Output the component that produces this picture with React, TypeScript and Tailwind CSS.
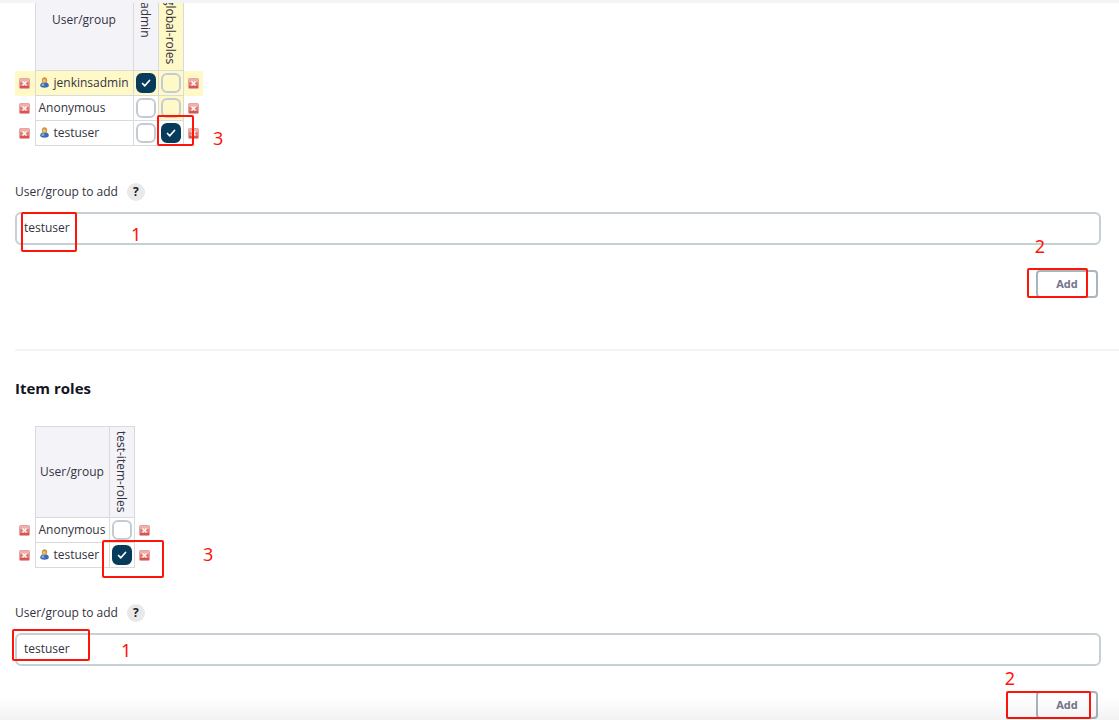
// src/App.tsx
import React, { useId, useState } from 'react';

interface Role {
  name: string;
  align?: 'center' | 'end';
}

interface Member {
  name: string;
  isUser: boolean;
  granted: boolean[];
}

interface RoleTableProps {
  roles: Role[];
  members: Member[];
  headHeight: string;
  nameWidth: string;
  hoverRow?: number;
  hoverCol?: number;
}

const DeleteIcon: React.FC = () => (
  <svg width="11" height="11" viewBox="0 0 11 11" className="block">
    <rect x="0.5" y="0.5" width="10" height="10" rx="1" fill="#e47e78" stroke="#e3a5a1" />
    <rect x="1" y="1" width="9" height="3" fill="#efb0a9" />
    <rect x="1" y="8" width="9" height="2" fill="#dc5450" />
    <path d="M3.500 3.500l4 4M7.500 3.500l-4 4" stroke="#fff" strokeWidth="1.400" />
  </svg>
);

const PersonIcon: React.FC = () => (
  <svg width="9" height="11" viewBox="0 0 9 11" className="block shrink-0">
    <path d="M0.200 8.500C0.200 6.400 2 5 4.500 5s4.300 1.400 4.300 3.500C8.800 11.400 0.200 11.400 0.200 8.500z" fill="#3a6cb4" />
    <path d="M1.200 8.600C1.300 7.200 2.200 6.200 3.500 6L4.500 9z" fill="#8aaedb" />
    <ellipse cx="4.500" cy="3.300" rx="2.600" ry="3" fill="#cf9038" />
    <ellipse cx="4.300" cy="3.800" rx="1.600" ry="1.800" fill="#edc078" />
  </svg>
);

const RoleCheckbox: React.FC<{ label: string; defaultChecked: boolean }> = ({ label, defaultChecked }) => (
  <label className="mx-auto grid size-5">
    <input
      type="checkbox"
      aria-label={label}
      defaultChecked={defaultChecked}
      className="peer col-start-1 row-start-1 size-5 appearance-none rounded-md border-2 border-[#c3ccd4] checked:border-[#073b5c] checked:bg-[#073b5c]"
    />
    <svg viewBox="0 0 20 20" className="pointer-events-none col-start-1 row-start-1 hidden size-5 peer-checked:block">
      <path d="M6.500 10.500l2.300 2.300L13.500 7.500" fill="none" stroke="#fff" strokeWidth="1.700" strokeLinecap="round" strokeLinejoin="round" />
    </svg>
  </label>
);

const DeleteCell: React.FC<{ name: string; highlighted: boolean }> = ({ name, highlighted }) => (
  <td className={`w-5 p-0 ${highlighted ? 'bg-[#fff9c8]' : ''}`}>
    <button type="button" aria-label={`Remove ${name}`} className="mx-auto block">
      <DeleteIcon />
    </button>
  </td>
);

const RoleTable: React.FC<RoleTableProps> = ({ roles, members, headHeight, nameWidth, hoverRow, hoverCol }) => (
  <table className="border-collapse">
    <thead>
      <tr className={headHeight}>
        <td className="w-5 p-0"></td>
        <th className={`border border-[#d9dadc] bg-[#f3f3f8] p-0 text-center font-normal ${nameWidth}`}>User/group</th>
        {roles.map((role, col) => (
          <th
            key={role.name}
            className={`w-[25px] border border-[#d9dadc] p-0 font-normal ${col === hoverCol ? 'bg-[#fff9c8]' : 'bg-[#f3f3f8]'} ${role.align === 'end' ? 'align-bottom pb-1.5' : 'align-middle'}`}
          >
            <span className="mx-auto block leading-[23px] [writing-mode:vertical-rl]">{role.name}</span>
          </th>
        ))}
        <td className="w-5 p-0"></td>
      </tr>
    </thead>
    <tbody>
      {members.map((member, row) => (
        <tr key={member.name} className="h-[25px]">
          <DeleteCell name={member.name} highlighted={row === hoverRow} />
          <td className={`border border-[#d9dadc] p-0 ${row === hoverRow ? 'bg-[#fff9c8]' : ''}`}>
            <div className={`flex items-center gap-[5px] pb-px leading-5 ${member.isUser ? 'pl-1' : 'pl-[3px]'}`}>
              {member.isUser && <PersonIcon />}
              {member.name}
            </div>
          </td>
          {roles.map((role, col) => (
            <td
              key={role.name}
              className={`border border-[#d9dadc] p-0 ${row === hoverRow || (col === hoverCol && row < 2) ? 'bg-[#fff9c8]' : ''}`}
            >
              <RoleCheckbox label={`${member.name} ${role.name}`} defaultChecked={member.granted[col]} />
            </td>
          ))}
          <DeleteCell name={member.name} highlighted={row === hoverRow} />
        </tr>
      ))}
    </tbody>
  </table>
);

// red frame drawn over the page
const Mark: React.FC<{ className: string }> = ({ className }) => (
  <div className={`pointer-events-none absolute rounded-xs border-2 border-[#ff1408] ${className}`} />
);

const Step: React.FC<{ n: number; className: string }> = ({ n, className }) => (
  <span className={`pointer-events-none absolute font-['Noto_Sans',sans-serif] text-lg leading-5 text-[#ff1408] ${className}`}>{n}</span>
);

const AddForm: React.FC<{ children: React.ReactNode }> = ({ children }) => {
  const id = useId();
  const [value, setValue] = useState('testuser');

  return (
    <div className="relative mr-[18px] flex flex-col">
      <div className="flex h-5 items-center gap-[9px]">
        <label htmlFor={id}>User/group to add</label>
        <button type="button" aria-label="Help" className="size-[18px] rounded-full bg-[#e9e9ea] leading-[18px] font-bold text-[#222]">
          ?
        </button>
      </div>
      <input
        id={id}
        type="text"
        value={value}
        onChange={(e) => setValue(e.target.value)}
        className="mt-[10px] h-[33px] w-full rounded-md border-2 border-[#c6cfd4] bg-white px-[7px] pb-0.5 outline-none"
      />
      <div className="mt-[25px] mr-[3px] flex justify-end">
        <button type="button" className="h-7 w-[62px] rounded-sm border-2 border-[#aab4bc] bg-white text-[11px] font-bold text-[#73738c]">
          Add
        </button>
      </div>
      {children}
    </div>
  );
};

export default function App() {
  return (
    <div className="relative h-screen overflow-hidden bg-white font-['Open_Sans','Noto_Sans',sans-serif] text-xs text-[#33333f]">
      <div className="h-[3px] bg-[#f4f4f6]" />
      <main className="pl-[15px]">
        <section className="flex flex-col gap-9">
          <div className="relative">
            {/* the table is scrolled partly under the top bar */}
            <div className="overflow-hidden">
              <div className="-mt-[34px]">
                <RoleTable
                  roles={[{ name: 'admin' }, { name: 'global-roles', align: 'end' }]}
                  members={[
                    { name: 'jenkinsadmin', isUser: true, granted: [true, false] },
                    { name: 'Anonymous', isUser: false, granted: [false, false] },
                    { name: 'testuser', isUser: true, granted: [false, true] },
                  ]}
                  headHeight="h-[101px]"
                  nameWidth="w-[98px]"
                  hoverRow={0}
                  hoverCol={1}
                />
              </div>
            </div>
            <Mark className="top-[112px] left-[142px] h-[31px] w-[37px]" />
            <Step n={3} className="top-[125px] left-[198px]" />
          </div>
          <AddForm>
            <Mark className="top-[30px] left-[6px] h-10 w-[56px]" />
            <Step n={1} className="top-[42px] left-[116px]" />
            <Step n={2} className="top-[54px] right-[56px]" />
            <Mark className="right-[13px] bottom-0 h-[30px] w-[61px]" />
          </AddForm>
        </section>

        <section className="mt-[51px] border-t-2 border-[#f3f3f8] pt-[25px]">
          <h2 className="text-[15px] leading-6 font-bold text-[#14141f]">Item roles</h2>
          <div className="mt-[26px] flex flex-col gap-[35px]">
            <div className="relative">
              <RoleTable
                roles={[{ name: 'test-item-roles' }]}
                members={[
                  { name: 'Anonymous', isUser: false, granted: [false] },
                  { name: 'testuser', isUser: true, granted: [true] },
                ]}
                headHeight="h-[91px]"
                nameWidth="w-[74px]"
              />
              <Mark className="top-[114px] left-[87px] h-[38px] w-[62px]" />
              <Step n={3} className="top-[118px] left-[188px]" />
            </div>
            <AddForm>
              <Mark className="top-[26px] -left-[3px] h-8 w-[78px]" />
              <Step n={1} className="top-[37px] left-[106px]" />
              <Step n={2} className="top-[65px] right-[86px]" />
              <Mark className="right-[10px] bottom-0 h-[28px] w-[85px]" />
            </AddForm>
          </div>
        </section>
      </main>
      <div className="pointer-events-none absolute inset-x-0 bottom-0 h-6 bg-linear-to-b from-transparent to-black/5" />
    </div>
  );
}
